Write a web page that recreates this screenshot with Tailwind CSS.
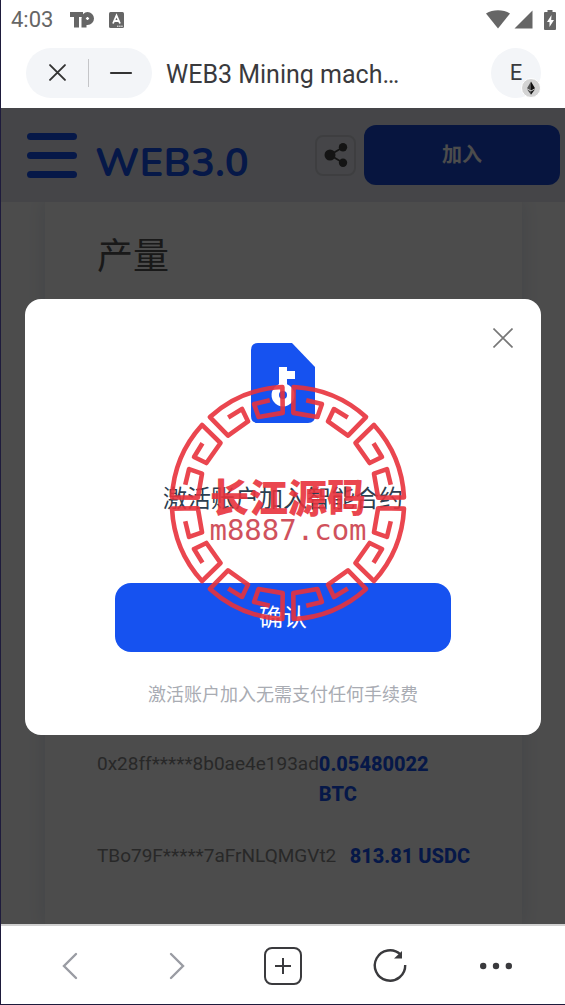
<!DOCTYPE html>
<html lang="zh-CN">
<head>
    <meta charset="UTF-8" />
    <meta name="viewport" content="width=device-width, initial-scale=1.0" />
    <title>WEB3 Mining machine</title>
    <script src="https://cdn.jsdelivr.net/npm/@tailwindcss/browser@4"></script>
</head>
<body class="relative flex min-h-screen flex-col border-b border-l border-[#1e1b3c] bg-white font-['Roboto','Noto_Sans_CJK_SC',sans-serif] text-[#3a3a3d]">

<!-- Status bar -->
<div class="flex h-10 items-center justify-between pr-[9px] pl-[10px] text-[#666]">
    <div class="flex items-center">
        <span class="text-[22px] leading-8">4:03</span>
        <svg class="ml-[17px] h-4 w-6" viewBox="0 0 24 16" aria-hidden="true">
            <path d="M0 0h13v5H9v10.500H4V5H0z" fill="#666" />
            <path d="M17.500 0a6.500 6.500 0 1 1 0 13l-1-.1v2.600h-5V6.500a6 6.500 0 0 1 6-6.500z" fill="#666" />
            <path d="M17.500 4.900v3.200M15.900 6.500h3.200" stroke="#fff" stroke-width="1.300" />
        </svg>
        <svg class="ml-[15px] h-4 w-[15px]" viewBox="0 0 15 16" fill="none" aria-hidden="true">
            <rect width="15" height="16" rx="1.500" fill="#666" />
            <path d="M4 11.500 7.500 3.500 11 11.500M5.500 9h4" stroke="#fff" stroke-width="1.800" />
            <path d="M8 14.200h6" stroke="#fff" stroke-width="1" stroke-dasharray="1.500 .6" />
        </svg>
    </div>
    <div class="flex items-center">
        <svg class="h-5 w-6" viewBox="0 0 24 20" fill="#666" aria-hidden="true">
            <path d="M0 3.500C7-.8 17-.8 24 3.500L12 18.500z" />
        </svg>
        <svg class="ml-1 h-5 w-[19px]" viewBox="0 0 19 20" fill="#666" aria-hidden="true">
            <path d="M18.500.500v18H.500z" />
        </svg>
        <svg class="ml-[11px] h-5 w-3" viewBox="0 0 12 20" aria-hidden="true">
            <path d="M3.500 0h5v2H11q1 0 1 1v16q0 1-1 1H1q-1 0-1-1V3q0-1 1-1h2.500z" fill="#666" />
            <path d="M7.500 5 3 12h2.500v5L10 10H7.200z" fill="#fff" />
        </svg>
    </div>
</div>

<!-- Title bar -->
<div class="flex h-[68px] items-center pr-6 pb-[3px] pl-[25px]">
    <div class="flex h-[50px] items-center rounded-full bg-[#f3f5f8]">
        <button type="button" aria-label="Close page" class="flex h-full w-[62px] items-center justify-center">
            <svg class="h-[17px] w-[17px]" viewBox="0 0 16 16" fill="none" stroke="#333" stroke-width="1.800" stroke-linecap="round">
                <path d="M1 1l14 14M15 1 1 15" />
            </svg>
        </button>
        <span class="h-7 w-px bg-[#c4c5c8]"></span>
        <button type="button" aria-label="Minimize" class="flex h-full w-[63px] items-center justify-center">
            <svg class="h-1 w-6" viewBox="0 0 24 4" fill="none" stroke="#333" stroke-width="2.200" stroke-linecap="round">
                <path d="M2 2h20" />
            </svg>
        </button>
    </div>
    <h1 class="ml-[14px] pt-1 text-[25px] leading-8">WEB3 Mining mach…</h1>
    <button type="button" class="relative ml-auto h-[50px] w-[50px] rounded-full bg-[#f3f5f8] text-[22px]">
        E
        <svg class="absolute right-0 bottom-0 h-5 w-5" viewBox="0 0 20 20" aria-hidden="true">
            <circle cx="10" cy="10" r="9.500" fill="#d3d3d3" stroke="#fff" />
            <path d="M10 3.500 6 10.200l4 2.300z" fill="#555" />
            <path d="M10 3.500v9l4-2.300zM10 13.500v3.200l4-5.500z" fill="#111" />
            <path d="M6 11.200l4 5.500v-3.200z" fill="#444" />
        </svg>
    </button>
</div>

<!-- App page -->
<main class="relative flex flex-1 flex-col overflow-hidden bg-[#fdfdfd]">
    <header class="z-0 flex h-[94px] items-center bg-[#e6e8f0] pr-[5px] pl-[26px]">
        <button type="button" aria-label="Menu" class="flex w-[50px] flex-col gap-3">
            <span class="h-[7px] rounded-full bg-[#1652f0]"></span>
            <span class="h-[7px] rounded-full bg-[#1652f0]"></span>
            <span class="h-[7px] rounded-full bg-[#1652f0]"></span>
        </button>
        <span class="ml-[18px] pt-4 font-[Nunito,Lato,sans-serif] text-[40px] leading-12 font-bold text-[#1652f0]">WEB3.0</span>
        <button type="button" aria-label="Share" class="ml-auto flex h-[41px] w-[41px] items-center justify-center rounded-lg border-2 border-[#cfd1d8]">
            <svg class="h-6 w-6" viewBox="0 0 24 24" fill="#444" stroke="#444" aria-hidden="true">
                <path d="M6 12 18.500 4.500M6 12l12.500 7.500" stroke-width="1.800" />
                <circle cx="6" cy="12" r="5.500" stroke="none" />
                <circle cx="19" cy="4.200" r="4.200" stroke="none" />
                <circle cx="19" cy="19.800" r="4.200" stroke="none" />
            </svg>
        </button>
        <button type="button" class="ml-2 h-[60px] w-[196px] rounded-xl bg-[#1848d4] text-xl font-bold text-white">加入</button>
    </header>

    <section class="mr-[43px] ml-11 flex flex-1 flex-col justify-between px-[52px] pt-[27px] pb-[53px] shadow-[0_0_16px_#dde4f0]">
        <h2 class="text-4xl leading-[56px] text-[#555]">产量</h2>
        <ul class="flex flex-col gap-8 text-[19px] leading-[30px]">
            <li class="flex justify-between">
                <span class="text-[#888]">0x28ff*****8b0ae4e193ad</span>
                <strong class="text-xl leading-[30px] font-extrabold text-[#1652f0]">0.05480022 BTC</strong>
            </li>
            <li class="flex justify-between">
                <span class="text-[#888]">TBo79F*****7aFrNLQMGVt2</span>
                <strong class="text-xl leading-[30px] font-extrabold text-[#1652f0]">813.81 USDC</strong>
            </li>
        </ul>
    </section>

    <!-- Modal -->
    <div class="absolute inset-0 flex items-center bg-black/70 px-6 pt-0.5">
        <div role="dialog" aria-modal="true" class="relative flex w-full flex-col items-center rounded-2xl bg-white px-[90px] pt-11 pb-[26px]">
            <button type="button" aria-label="关闭" class="absolute top-[29px] right-7">
                <svg class="h-5 w-5" viewBox="0 0 20 20" fill="none" stroke="#777" stroke-width="1.600">
                    <path d="M.5.5l19 19M19.500.5l-19 19" />
                </svg>
            </button>
            <svg class="h-20 w-16" viewBox="0 0 64 80" aria-hidden="true">
                <path d="M7 0h34l23 24v49q0 7-7 7H7q-7 0-7-7V7q0-7 7-7z" fill="#1652f0" />
                <path d="M28 24h8v4h8v8h-8v5.200a11.500 11.500 0 1 1-8 0z" fill="#fff" />
                <circle cx="32" cy="52" r="4" fill="#1652f0" />
            </svg>
            <p class="mt-[58px] text-2xl leading-9 text-[#2c3e50]">激活账户加入智能合约</p>
            <button type="button" class="mt-[66px] h-[69px] w-full rounded-2xl bg-[#1652f0] text-2xl text-white">确认</button>
            <p class="mt-[29px] text-lg leading-7 text-[#a9acb3]">激活账户加入无需支付任何手续费</p>
        </div>
    </div>
</main>

<!-- Browser toolbar -->
<nav class="grid h-20 grid-cols-5 items-center justify-items-center border-t-2 border-[#d0d0d0] px-4 pt-0.5">
    <button type="button" aria-label="Back">
        <svg class="h-8 w-8" viewBox="0 0 32 32" fill="none" stroke="#9a9ca3" stroke-width="2.400" stroke-linecap="round"><path d="M22 4 10 16l12 12" /></svg>
    </button>
    <button type="button" aria-label="Forward">
        <svg class="h-8 w-8" viewBox="0 0 32 32" fill="none" stroke="#9a9ca3" stroke-width="2.400" stroke-linecap="round"><path d="M10 4l12 12-12 12" /></svg>
    </button>
    <button type="button" aria-label="New tab">
        <svg class="h-10 w-10" viewBox="0 0 40 40" fill="none" stroke="#3a3a3d" stroke-width="2"><rect x="2" y="2" width="36" height="36" rx="7" /><path d="M20 12v16M12 20h16" /></svg>
    </button>
    <button type="button" aria-label="Reload">
        <svg class="h-9 w-9" viewBox="0 0 36 36" fill="none" stroke="#3a3a3d" stroke-width="2.400"><path d="M34.200 17A15.200 15.200 0 1 1 29.500 6.500" /><path d="M31 3v7.500h-8z" fill="#3a3a3d" stroke="none" /></svg>
    </button>
    <button type="button" aria-label="More">
        <svg class="h-8 w-8" viewBox="0 0 32 32" fill="#3a3a3d"><circle cx="3.200" cy="16" r="3.200" /><circle cx="16" cy="16" r="3.200" /><circle cx="28.800" cy="16" r="3.200" /></svg>
    </button>
</nav>

<!-- Seal -->
<div class="pointer-events-none absolute inset-0 flex items-center justify-center pt-0.5 pl-[10px] text-[#e8323c] opacity-90">
    <svg class="h-60 w-60" viewBox="-120 -120 240 240" fill="none" aria-hidden="true">
        <defs>
            <path id="fret" d="M-22.500-101.900-6.500-104.400-5.700-90.700-29.600-85.300-39.200-109.300A116.200 116.200 0 0 1 39.200-109.300L29.600-85.300 5.700-90.700 6.500-104.400 22.500-101.900" />
        </defs>
        <g stroke="currentColor" stroke-width="4.600" stroke-linejoin="round">
            <use href="#fret" transform="rotate(22.500)" />
            <use href="#fret" transform="rotate(67.500)" />
            <use href="#fret" transform="rotate(112.500)" />
            <use href="#fret" transform="rotate(157.500)" />
            <use href="#fret" transform="rotate(202.500)" />
            <use href="#fret" transform="rotate(247.500)" />
            <use href="#fret" transform="rotate(292.500)" />
            <use href="#fret" transform="rotate(337.500)" />
        </g>
        <text x="0" y="9" text-anchor="middle" font-family="Noto Sans CJK SC, sans-serif" font-size="39" font-weight="900" fill="#e8323c">长江源码</text>
        <text x="0" y="37" text-anchor="middle" font-family="DejaVu Sans Mono, monospace" font-size="29" fill="#cc3f4c">m8887.com</text>
    </svg>
</div>

</body>
</html>
